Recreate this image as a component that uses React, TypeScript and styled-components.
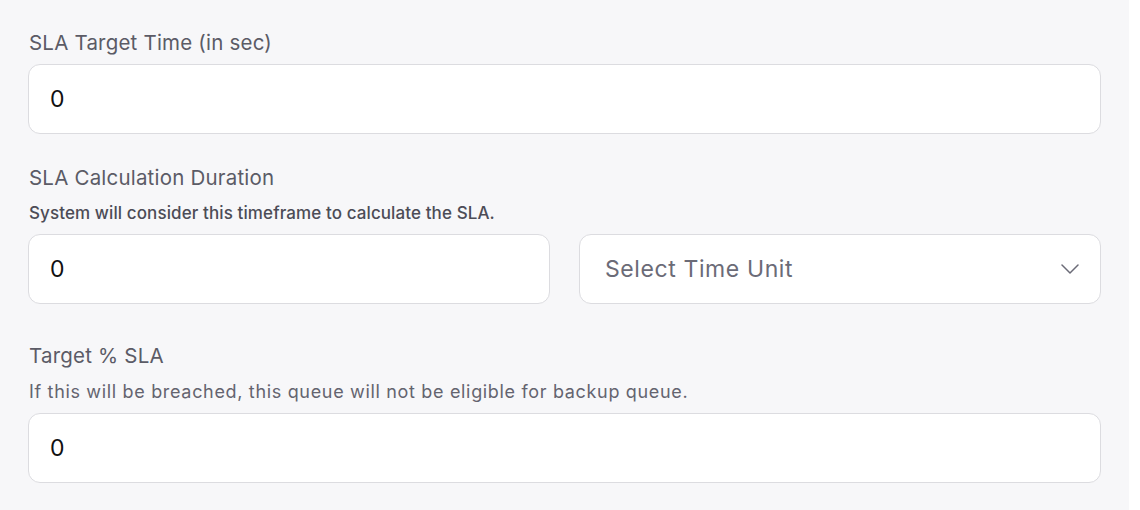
import React from "react";
import styled, { createGlobalStyle } from "styled-components";

const Global = createGlobalStyle`
  html, body { margin: 0; padding: 0; background: #ffffff; }
  body { font-family: Inter, "Noto Sans", "Liberation Sans", sans-serif; }
  * { box-sizing: border-box; }
`;

const Page = styled.div`
  width: 1129px;
  height: 510px;
  background: #f7f7f9;
  padding: 31px 28px 0 28px;
  display: flex;
  flex-direction: column;
`;

const Field = styled.div<{ $mt?: number }>`
  display: flex;
  flex-direction: column;
  margin-top: ${(p) => p.$mt ?? 0}px;
`;

const Label = styled.div`
  font-size: 20.5px;
  letter-spacing: 0.2px;
  line-height: 24px;
  color: #5b5b66;
  padding-left: 1px;
`;

const Help = styled.div<{ $strong?: boolean }>`
  font-size: ${(p) => (p.$strong ? "17px" : "18px")};
  letter-spacing: ${(p) => (p.$strong ? "0.1px" : "0.67px")};
  line-height: 24px;
  margin-top: ${(p) => (p.$strong ? 11 : 12)}px;
  padding-left: 1px;
  color: ${(p) => (p.$strong ? "#4c4c56" : "#64646f")};
  font-weight: ${(p) => (p.$strong ? 450 : 400)};
`;

const Row = styled.div`
  display: flex;
  gap: 29px;
  margin-top: 9px;
`;

const Box = styled.div`
  flex: 1;
  height: 70px;
  background: #ffffff;
  border: 1px solid #dcdce0;
  border-radius: 12px;
  display: flex;
  align-items: center;
  padding: 0 21px 0 21px;
  font-size: 23px;
  color: #111111;
`;

const Placeholder = styled.span`
  flex: 1;
  color: #6b6b77;
  font-size: 23px;
  letter-spacing: 0.6px;
  padding-left: 4px;
`;

const Chevron = () => (
  <svg width="18" height="10" viewBox="0 0 18 10" fill="none">
    <path d="M1 1 L9 9 L17 1" stroke="#6b6b77" strokeWidth="1.5" strokeLinecap="round" strokeLinejoin="round" />
  </svg>
);

export default function App() {
  return (
    <>
      <Global />
      <Page>
        <Field>
          <Label>SLA Target Time (in sec)</Label>
          <Row>
            <Box>0</Box>
          </Row>
        </Field>
        <Field $mt={32}>
          <Label>SLA Calculation Duration</Label>
          <Help $strong>System will consider this timeframe to calculate the SLA.</Help>
          <Row>
            <Box>0</Box>
            <Box>
              <Placeholder>Select Time Unit</Placeholder>
              <Chevron />
            </Box>
          </Row>
        </Field>
        <Field $mt={40}>
          <Label>Target % SLA</Label>
          <Help>If this will be breached, this queue will not be eligible for backup queue.</Help>
          <Row>
            <Box>0</Box>
          </Row>
        </Field>
      </Page>
    </>
  );
}
